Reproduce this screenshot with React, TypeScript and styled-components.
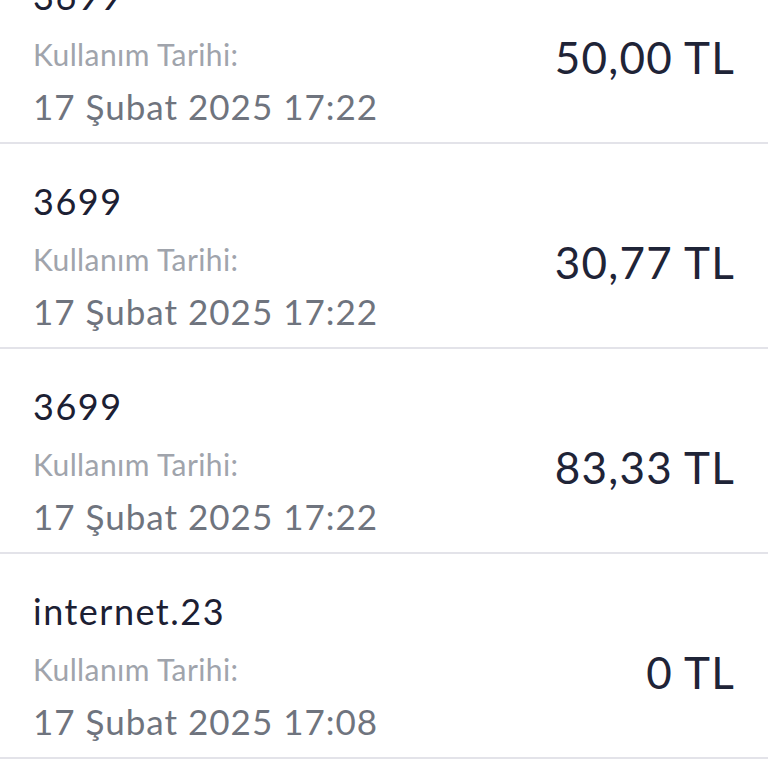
import React from 'react';
import styled, { createGlobalStyle } from 'styled-components';

const GlobalStyle = createGlobalStyle`
    html, body {
        margin: 0;
        padding: 0;
        background: #ffffff;
        overflow: hidden;
    }
    body {
        font-family: Lato, 'Noto Sans', sans-serif;
    }
`;

interface IKullanim {
    baslik: string;
    tarih: string;
    tutar: string;
}

const kullanimlar: IKullanim[] = [
    { baslik: '3699', tarih: '17 Şubat 2025 17:22', tutar: '50,00 TL' },
    { baslik: '3699', tarih: '17 Şubat 2025 17:22', tutar: '30,77 TL' },
    { baslik: '3699', tarih: '17 Şubat 2025 17:22', tutar: '83,33 TL' },
    { baslik: 'internet.23', tarih: '17 Şubat 2025 17:08', tutar: '0 TL' },
];

const Liste = styled.div`
    display: flex;
    flex-direction: column;
    margin-top: -61px;
`;

const Satir = styled.div`
    display: flex;
    align-items: center;
    justify-content: space-between;
    padding: 35px 33px 12px 33px;
    border-bottom: 2px solid #e3e3e9;
`;

const Sol = styled.div`
    display: flex;
    flex-direction: column;
`;

const Baslik = styled.div`
    font-size: 36px;
    line-height: 44px;
    letter-spacing: 1.5px;
    color: #1c2033;
`;

const Etiket = styled.div`
    font-size: 30px;
    line-height: 40px;
    letter-spacing: 0.4px;
    color: #a0a4ac;
    margin-top: 16px;
`;

const Tarih = styled.div`
    font-size: 35px;
    line-height: 48px;
    letter-spacing: 1px;
    color: #6f747e;
    margin-top: 8px;
`;

const Tutar = styled.div`
    font-size: 44px;
    letter-spacing: 1.2px;
    color: #1f2437;
    padding-top: 10px;
`;

const App: React.FunctionComponent = () => {
    return (
        <>
            <GlobalStyle />
            <Liste>
                {kullanimlar.map((kullanim, i) => (
                    <Satir key={i}>
                        <Sol>
                            <Baslik>{kullanim.baslik}</Baslik>
                            <Etiket>Kullanım Tarihi:</Etiket>
                            <Tarih>{kullanim.tarih}</Tarih>
                        </Sol>
                        <Tutar>{kullanim.tutar}</Tutar>
                    </Satir>
                ))}
            </Liste>
        </>
    );
};

export default App;
